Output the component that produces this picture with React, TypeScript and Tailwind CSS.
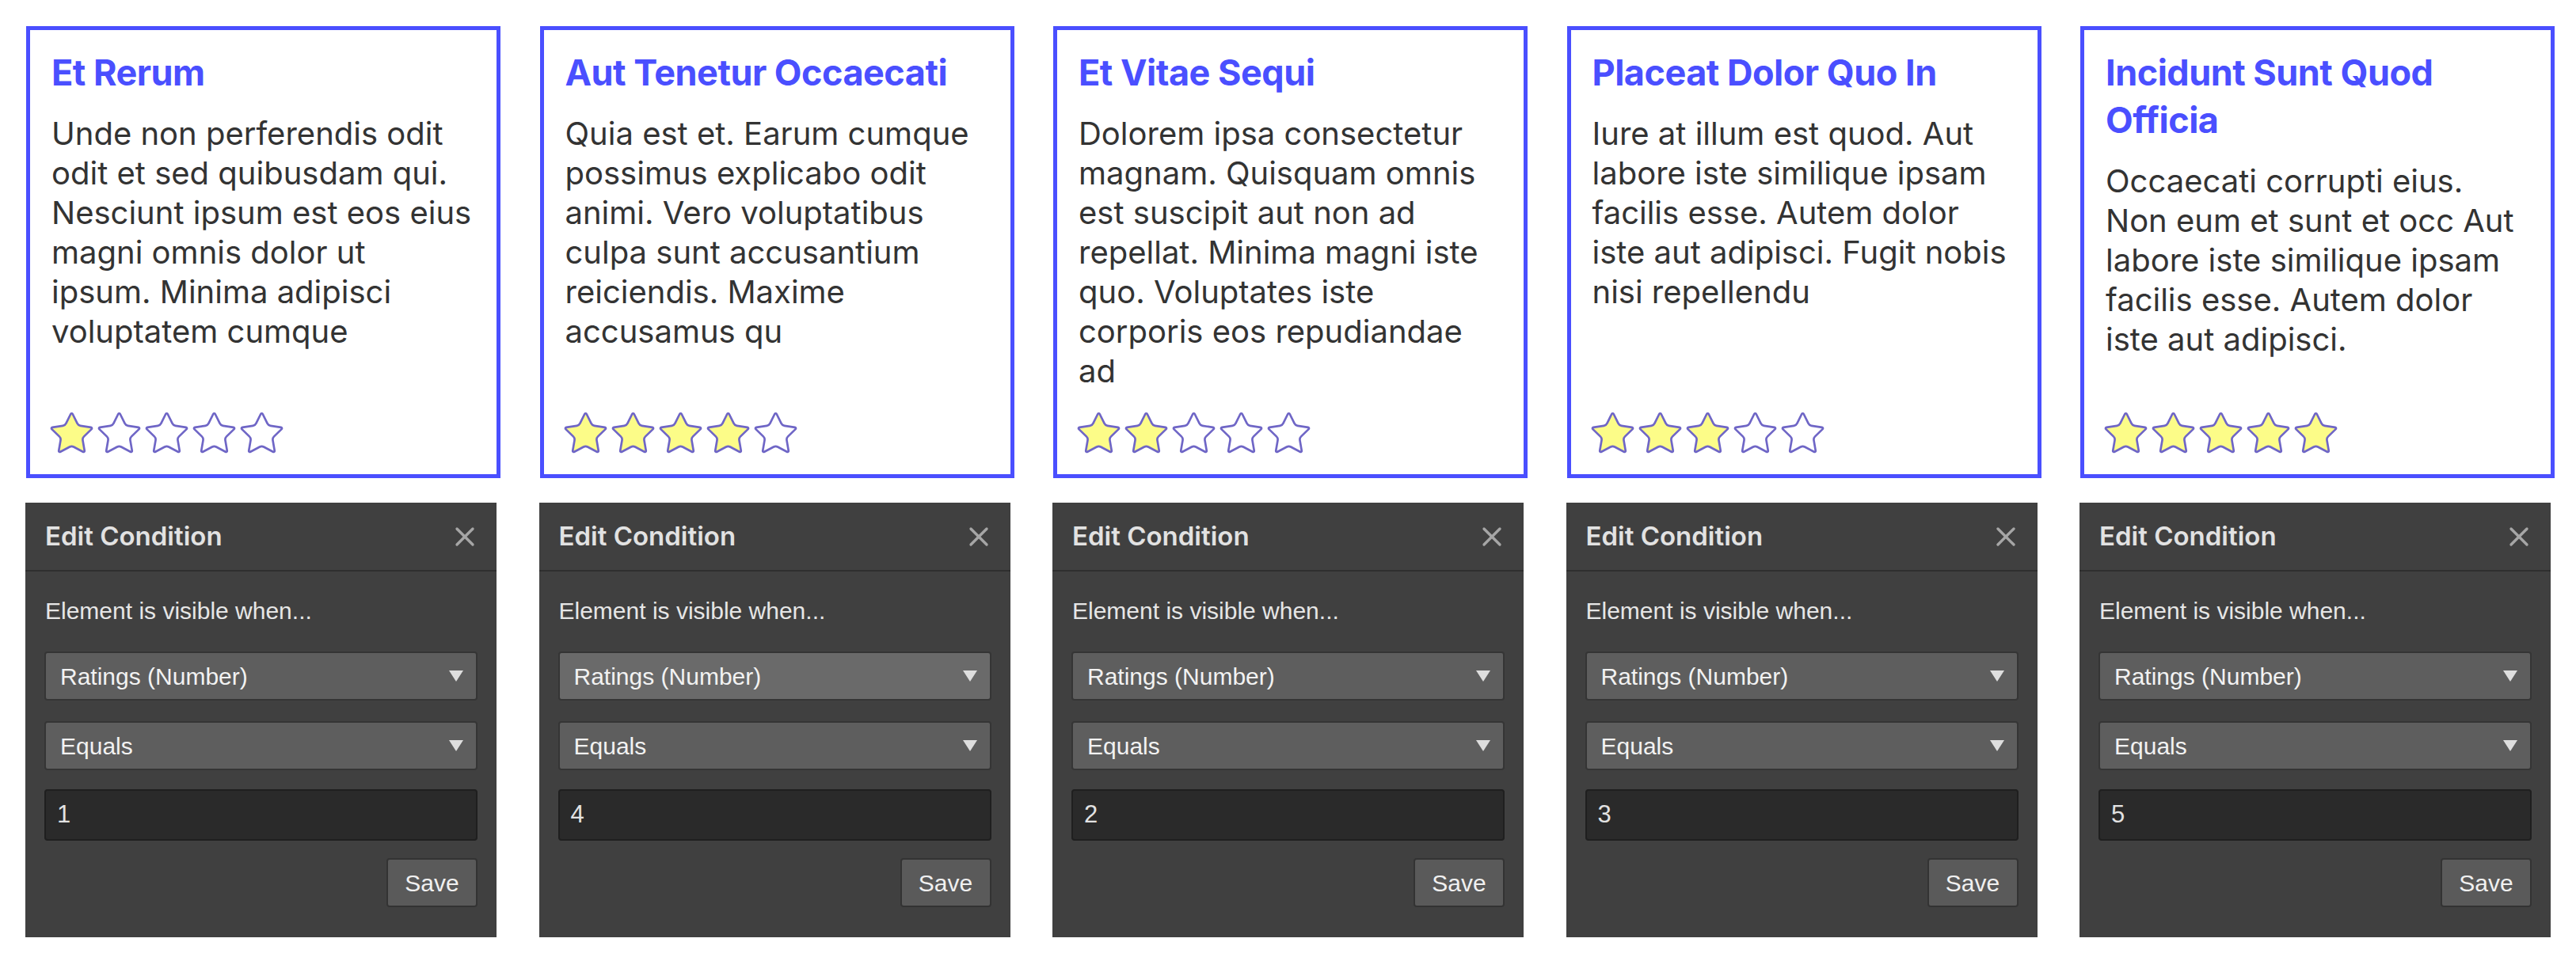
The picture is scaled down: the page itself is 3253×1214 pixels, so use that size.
import { X } from "lucide-react";

type Review = {
  title: string;
  body: string;
  rating: number;
};

const reviews: Review[] = [
  {
    title: "Et Rerum",
    body: "Unde non perferendis odit odit et sed quibusdam qui. Nesciunt ipsum est eos eius magni omnis dolor ut ipsum.\u00a0Minima adipisci voluptatem cumque",
    rating: 1,
  },
  {
    title: "Aut Tenetur Occaecati",
    body: "Quia est et. Earum cumque possimus explicabo odit animi. Vero voluptatibus culpa sunt accusantium reiciendis. Maxime accusamus qu",
    rating: 4,
  },
  {
    title: "Et Vitae Sequi",
    body: "Dolorem ipsa consectetur magnam. Quisquam omnis est suscipit aut non ad repellat. Minima magni iste quo. Voluptates iste corporis eos repudiandae ad",
    rating: 2,
  },
  {
    title: "Placeat Dolor Quo In",
    body: "Iure at illum est quod. Aut labore iste similique ipsam facilis esse. Autem dolor iste aut adipisci. Fugit nobis nisi repellendu",
    rating: 3,
  },
  {
    title: "Incidunt Sunt Quod Officia",
    body: "Occaecati corrupti eius. Non eum et sunt et occ Aut labore iste similique ipsam facilis esse. Autem dolor iste aut adipisci.",
    rating: 5,
  },
];

const STAR =
  "M11.525 2.295a.53.53 0 0 1 .95 0l2.31 4.679a2.123 2.123 0 0 0 1.595 1.16l5.166.756a.53.53 0 0 1 .294.904l-3.736 3.638a2.123 2.123 0 0 0-.611 1.878l.882 5.14a.53.53 0 0 1-.771.56l-4.618-2.428a2.122 2.122 0 0 0-1.973 0L6.396 21.01a.53.53 0 0 1-.77-.56l.881-5.139a2.122 2.122 0 0 0-.611-1.879L2.16 9.795a.53.53 0 0 1 .294-.906l5.165-.755a2.122 2.122 0 0 0 1.597-1.16z";

function Star({ filled }: { filled: boolean }) {
  return (
    <svg viewBox="1.4 1.5 21.2 20.4" className="h-[52px] w-[55px]">
      <path
        d={STAR}
        fill={filled ? "#fcfc88" : "#ffffff"}
        stroke="#6f66c6"
        strokeWidth={1.05}
        strokeLinejoin="round"
      />
    </svg>
  );
}

function ReviewCard({ review }: { review: Review }) {
  return (
    <article className="flex h-[571px] flex-col border-[5px] border-[#4a4fff] bg-white px-[27px] pb-[26px] pt-[24px] font-['Inter',sans-serif]">
      <h2 className="text-[45px] font-bold leading-[60px] tracking-[-0.5px] text-[#4a4fff]">
        {review.title}
      </h2>
      <p className="mt-[22px] text-[40px] leading-[50px] text-[#333333]">{review.body}</p>
      <div className="mt-auto flex gap-[5px] -ml-[2px]">
        {[1, 2, 3, 4, 5].map((n) => (
          <Star key={n} filled={n <= review.rating} />
        ))}
      </div>
    </article>
  );
}

function Caret() {
  return (
    <svg viewBox="0 0 18 14" className="h-[14px] w-[18px]">
      <path d="M0 0h18L9 14z" fill="#dedede" />
    </svg>
  );
}

function SelectBox({ label, light }: { label: string; light?: boolean }) {
  return (
    <div
      className={`flex h-[62px] items-center justify-between rounded-[4px] border-2 border-[#353535] pl-[18px] pr-[16px] ${
        light ? "bg-[#6a6a6a]" : "bg-[#5e5e5e]"
      }`}
    >
      <span className="text-[30px] text-[#f2f2f2]">{label}</span>
      <Caret />
    </div>
  );
}

function ConditionPanel({ value, light }: { value: number; light?: boolean }) {
  return (
    <section className="ml-[-1px] flex h-[549px] w-[595px] flex-col bg-[#404040] font-['Liberation_Sans',Arial,sans-serif]">
      <header className="flex h-[87px] items-center justify-between border-b-2 border-[#2f2f2f] pl-[25px] pr-[20px]">
        <h3 className="font-['Inter',sans-serif] text-[33px] font-semibold text-[#e2e2e2]">Edit Condition</h3>
        <X className="h-[40px] w-[40px] text-[#a6a6a6]" strokeWidth={2} />
      </header>
      <div className="flex flex-col px-[24px] pt-[32px]">
        <p className="pl-[1px] text-[30px] leading-[36px] text-[#e6e6e6]">Element is visible when...</p>
        <div className="mt-[33px] flex flex-col gap-[26px]">
          <SelectBox label="Ratings (Number)" light={light} />
          <SelectBox label="Equals" />
        </div>
        <div className="mt-[24px] flex h-[65px] items-center rounded-[4px] border-2 border-[#1f1f1f] bg-[#2a2a2a] px-[14px] text-[31px] text-[#e2e2e2]">
          {value}
        </div>
        <div className="mt-[22px] flex justify-end">
          <button
            type="button"
            className="h-[62px] w-[115px] rounded-[4px] border-2 border-[#333333] bg-[#5a5a5a] text-[30px] text-[#f0f0f0]"
          >
            Save
          </button>
        </div>
      </div>
    </section>
  );
}

export default function App() {
  return (
    <div className="flex min-h-[1214px] gap-[49.5px] bg-white pl-[33px] pt-[33px]">
      {reviews.map((review, i) => (
        <div key={review.title} className="flex w-[599px] flex-col gap-[31px]">
          <ReviewCard review={review} />
          <ConditionPanel value={review.rating} light={i === 1} />
        </div>
      ))}
    </div>
  );
}
